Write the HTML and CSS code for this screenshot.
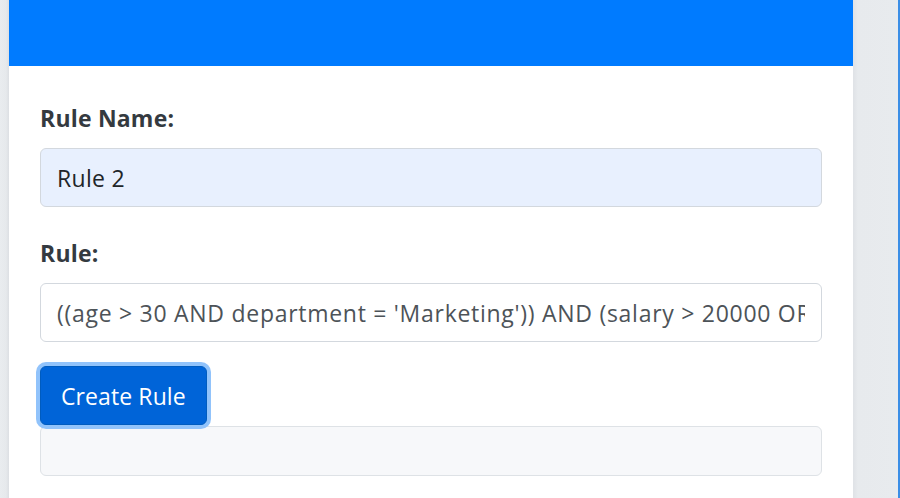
FILE: index.html
```html
<!DOCTYPE html>
<html lang="en">
<head>
<meta charset="utf-8">
<title>Rule Engine</title>
<link rel="stylesheet" href="styles.css">
</head>
<body>
<div class="page">
  <div class="gutter-left"></div>
  <main class="card">
    <header class="card-header"></header>
    <section class="card-body">
      <div class="form-group">
        <label class="form-label" for="ruleName">Rule Name:</label>
        <input class="form-control autofilled" id="ruleName" type="text" value="Rule 2">
      </div>
      <div class="form-group">
        <label class="form-label" for="ruleText">Rule:</label>
        <input class="form-control rule-text" id="ruleText" type="text" value="((age > 30 AND department = 'Marketing')) AND (salary > 20000 OR experience > 5)">
      </div>
      <button class="btn-primary" type="button">Create Rule</button>
      <div class="result-box"></div>
    </section>
  </main>
  <div class="gutter-right"></div>
</div>
</body>
</html>
```

FILE: styles.css
```css
html, body {
  margin: 0;
  padding: 0;
  height: 100%;
  overflow: hidden;
}

body {
  background: #e8ebee;
  font-family: "Open Sans", "Noto Sans", sans-serif;
  font-size: 23px;
  color: #343a40;
}

.page {
  display: flex;
  height: 498px;
}

.gutter-left {
  width: 9px;
  flex: none;
  background: linear-gradient(to right, #e9ecef 0, #e6e9ec 6px, #dcdfe3 9px);
}

.card {
  width: 844px;
  flex: none;
  background: #ffffff;
  display: flex;
  flex-direction: column;
}

.card-header {
  height: 66px;
  background: #007bff;
  flex: none;
}

.card-body {
  padding: 35px 31px 0 31px;
}

.form-group {
  margin-bottom: 29px;
}

.form-label {
  display: block;
  font-weight: 700;
  line-height: 34px;
  margin-bottom: 13px;
  color: #343a40;
  letter-spacing: 0.2px;
}

.form-control {
  display: block;
  box-sizing: border-box;
  width: 100%;
  height: 59px;
  padding: 0 16px;
  border: 1px solid #d3d8de;
  border-radius: 6px;
  background: #ffffff;
  font-family: inherit;
  font-size: 23px;
  color: #4d5358;
  outline: none;
  letter-spacing: 0.3px;
}

.form-control.rule-text {
  letter-spacing: 0.72px;
}

.form-control.autofilled {
  background: #e8f0fe;
  color: #212529;
}

.form-group + .form-group {
  margin-bottom: 24px;
}

.btn-primary {
  display: block;
  box-sizing: border-box;
  height: 59px;
  padding: 0 20px;
  border: 1px solid #005cbf;
  border-radius: 6px;
  background: #0064d8;
  color: #ffffff;
  font-family: inherit;
  font-size: 23px;
  letter-spacing: 0.1px;
  box-shadow: 0 0 0 4px #91c3fb;
  position: relative;
  z-index: 1;
}

.result-box {
  box-sizing: border-box;
  height: 50px;
  margin-top: 1px;
  border: 1px solid #dee2e6;
  border-radius: 6px;
  background: #f7f8fa;
}

.gutter-right {
  flex: 1;
  background: linear-gradient(to right, #dfe2e6 0, #e7eaed 5px, #e8ebee 100%);
  border-right: 2px solid #3b8ee6;
}
```
